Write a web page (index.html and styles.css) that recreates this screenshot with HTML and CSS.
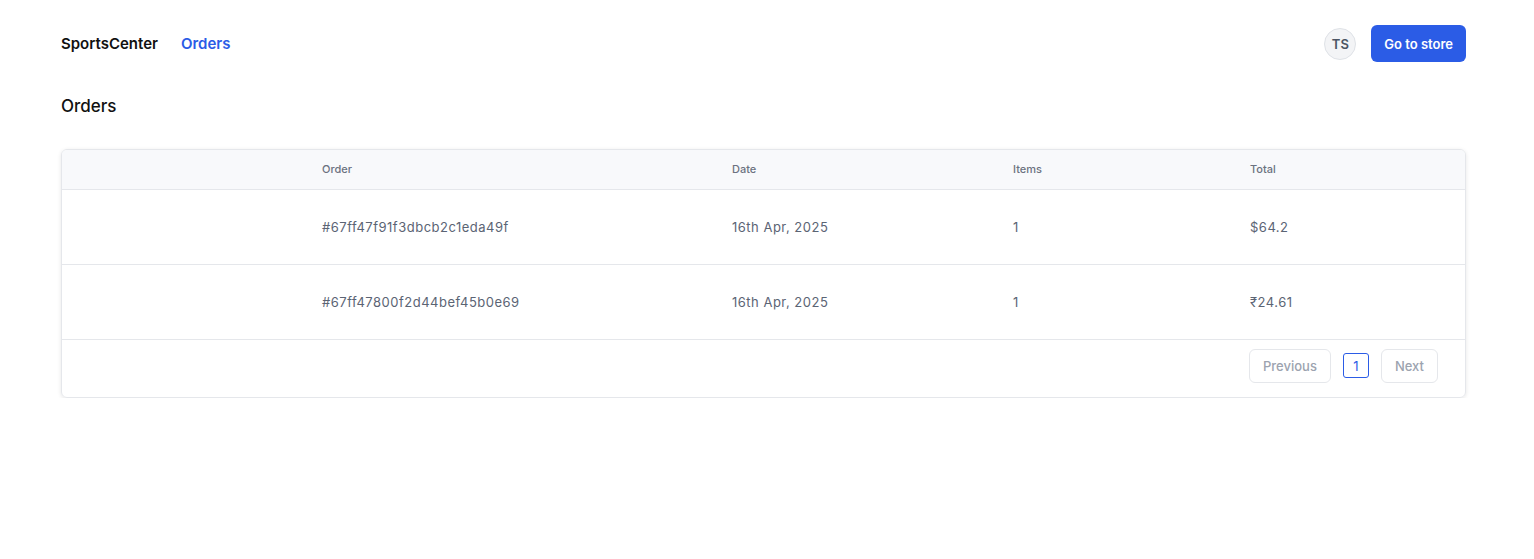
FILE: index.html
```html
<!DOCTYPE html>
<html lang="en">
<head>
    <meta charset="UTF-8">
    <meta name="viewport" content="width=device-width, initial-scale=1.0">
    <title>Orders - SportsCenter</title>
    <link rel="stylesheet" href="styles.css">
</head>
<body>
    <div class="page">
        <header class="nav">
            <div class="nav-left">
                <span class="brand">SportsCenter</span>
                <a class="nav-link" href="#">Orders</a>
            </div>
            <div class="nav-right">
                <span class="avatar">TS</span>
                <button class="store-btn">Go to store</button>
            </div>
        </header>

        <h1 class="title">Orders</h1>

        <div class="card">
            <table class="orders">
                <colgroup>
                    <col class="col-img">
                    <col class="col-order">
                    <col class="col-date">
                    <col class="col-items">
                    <col>
                </colgroup>
                <thead>
                    <tr>
                        <th></th>
                        <th>Order</th>
                        <th>Date</th>
                        <th>Items</th>
                        <th>Total</th>
                    </tr>
                </thead>
                <tbody>
                    <tr>
                        <td></td>
                        <td>#67ff47f91f3dbcb2c1eda49f</td>
                        <td>16th Apr, 2025</td>
                        <td>1</td>
                        <td>$64.2</td>
                    </tr>
                    <tr>
                        <td><span class="thumb"></span></td>
                        <td>#67ff47800f2d44bef45b0e69</td>
                        <td>16th Apr, 2025</td>
                        <td>1</td>
                        <td>₹24.61</td>
                    </tr>
                </tbody>
            </table>
            <div class="pager">
                <button class="page-btn">Previous</button>
                <span class="page-num">1</span>
                <button class="page-btn">Next</button>
            </div>
        </div>
    </div>
</body>
</html>
```

FILE: styles.css
```css
body {
    margin: 0;
    font-family: Inter, "Noto Sans", Arial, sans-serif;
    background: #fff;
    color: #111;
}
.page {
    padding: 25px 68px 0 61px;
}
.nav {
    display: flex;
    justify-content: space-between;
    align-items: center;
    height: 37px;
}
.nav-left {
    display: flex;
    align-items: center;
    gap: 23px;
}
.brand {
    font-size: 15px;
    font-weight: 600;
    color: #111;
}
.nav-link {
    font-size: 15px;
    font-weight: 600;
    color: #2b5ce6;
    text-decoration: none;
}
.nav-right {
    display: flex;
    align-items: center;
    gap: 15px;
}
.avatar {
    width: 30px;
    height: 30px;
    border-radius: 50%;
    border: 1px solid #dfe2e7;
    background: #f3f4f6;
    color: #4b5563;
    font-size: 13px;
    font-weight: 600;
    display: flex;
    align-items: center;
    justify-content: center;
}
.store-btn {
    height: 37px;
    padding: 0 13px;
    border: none;
    border-radius: 6px;
    background: #2b5ce6;
    color: #fff;
    font-family: inherit;
    font-size: 13px;
    font-weight: 600;
}
.title {
    margin: 33px 0 0;
    font-size: 17px;
    font-weight: 500;
    line-height: 22px;
}
.card {
    margin-top: 32px;
    border: 1px solid #e5e7eb;
    border-radius: 6px;
    box-shadow: 0 1px 4px rgba(0,0,0,0.1);
    overflow: hidden;
}
.orders {
    width: 100%;
    border-collapse: collapse;
    table-layout: fixed;
}
.col-img { width: 260px; }
.col-order { width: 410px; }
.col-date { width: 281px; }
.col-items { width: 237px; }
.orders th {
    height: 37px;
    padding: 0 0 2px;
    background: #f8f9fb;
    border-bottom: 1px solid #e5e7eb;
    text-align: left;
    font-size: 11px;
    font-weight: 500;
    color: #6b7280;
}
.orders td {
    height: 74px;
    padding: 0;
    border-bottom: 1px solid #e5e7eb;
    font-size: 13px;
    letter-spacing: 0.5px;
    color: #5b6474;
}
.thumb {
    display: block;
    width: 10px;
    height: 1px;
    margin: -38px 0 0 39px;
    background: #e4e5e8;
}
.pager {
    display: flex;
    justify-content: flex-end;
    align-items: center;
    gap: 12px;
    height: 51px;
    padding: 0 27px 6px 0;
}
.page-btn {
    height: 34px;
    padding: 0 13px;
    border: 1px solid #e5e7eb;
    border-radius: 6px;
    background: #fff;
    color: #9ca3af;
    font-family: inherit;
    font-size: 13px;
    font-weight: 500;
}
.page-num {
    width: 24px;
    height: 23px;
    border: 1px solid #2b5ce6;
    border-radius: 3px;
    display: flex;
    align-items: center;
    justify-content: center;
    font-size: 13px;
    color: #2b5ce6;
}
```
